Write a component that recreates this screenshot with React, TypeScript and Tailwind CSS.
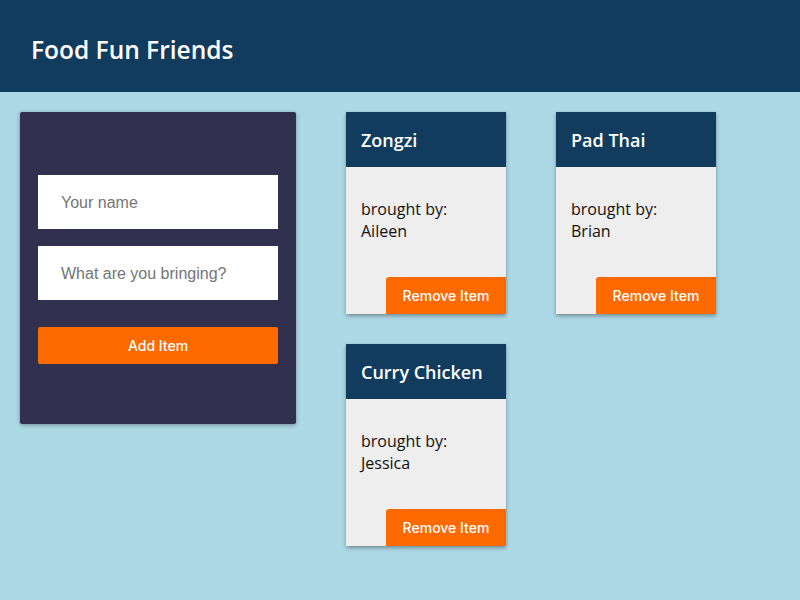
import React from "react";

const items = [
  { food: "Zongzi", name: "Aileen" },
  { food: "Pad Thai", name: "Brian" },
  { food: "Curry Chicken", name: "Jessica" },
];

export default function App() {
  return (
    <div className="min-h-[600px] w-full bg-[#add8e6]" style={{ fontFamily: '"Open Sans", sans-serif' }}>
      <header className="flex h-[92px] items-center bg-[#113c5e] px-[31px] pt-[8px]">
        <h1 className="text-[24.5px] font-semibold leading-none text-white">Food Fun Friends</h1>
      </header>
      <main className="flex items-start pl-[20px] pt-[20px]">
        <div className="flex h-[312px] w-[276px] flex-col rounded-[2px] bg-[#31304f] px-[18px] pt-[63px] shadow-[0_1px_4px_rgba(0,0,0,0.35)]">
          <input
            className="h-[54px] w-full bg-white px-[23px] pt-[1px] text-[16px] text-[#333] outline-none placeholder:text-[#757575]"
            style={{ fontFamily: '"Liberation Sans", Arial, sans-serif' }}
            placeholder="Your name"
          />
          <input
            className="mt-[17px] h-[54px] w-full bg-white px-[23px] pt-[1px] text-[16px] text-[#333] outline-none placeholder:text-[#757575]"
            style={{ fontFamily: '"Liberation Sans", Arial, sans-serif' }}
            placeholder="What are you bringing?"
          />
          <button
            className="mt-[27px] h-[37px] w-full rounded-[2px] bg-[#ff6a00] text-[14px] font-medium text-white"
            style={{ fontFamily: 'Inter, "Liberation Sans", sans-serif' }}
          >
            Add Item
          </button>
        </div>
        <div className="ml-[50px] grid grid-cols-[160px_160px] gap-x-[50px] gap-y-[30px]">
          {items.map((it) => (
            <div key={it.food} className="flex h-[202px] w-[160px] flex-col bg-[#eeeeee] shadow-[0_2px_4px_rgba(0,0,0,0.35)]">
              <div className="flex h-[55px] items-center bg-[#113c5e] px-[15px] pt-[1px]">
                <span className="text-[18px] font-semibold text-white">{it.food}</span>
              </div>
              <div className="flex flex-1 flex-col justify-between">
                <p className="px-[15px] pt-[31px] text-[16px] leading-[22px] text-[#111]">
                  brought by:
                  <br />
                  {it.name}
                </p>
                <div className="flex justify-end">
                  <button
                    className="h-[37px] w-[120px] rounded-tl-[3px] bg-[#ff6a00] text-[14px] font-medium text-white"
                    style={{ fontFamily: 'Inter, "Liberation Sans", sans-serif' }}
                  >
                    Remove Item
                  </button>
                </div>
              </div>
            </div>
          ))}
        </div>
      </main>
    </div>
  );
}
